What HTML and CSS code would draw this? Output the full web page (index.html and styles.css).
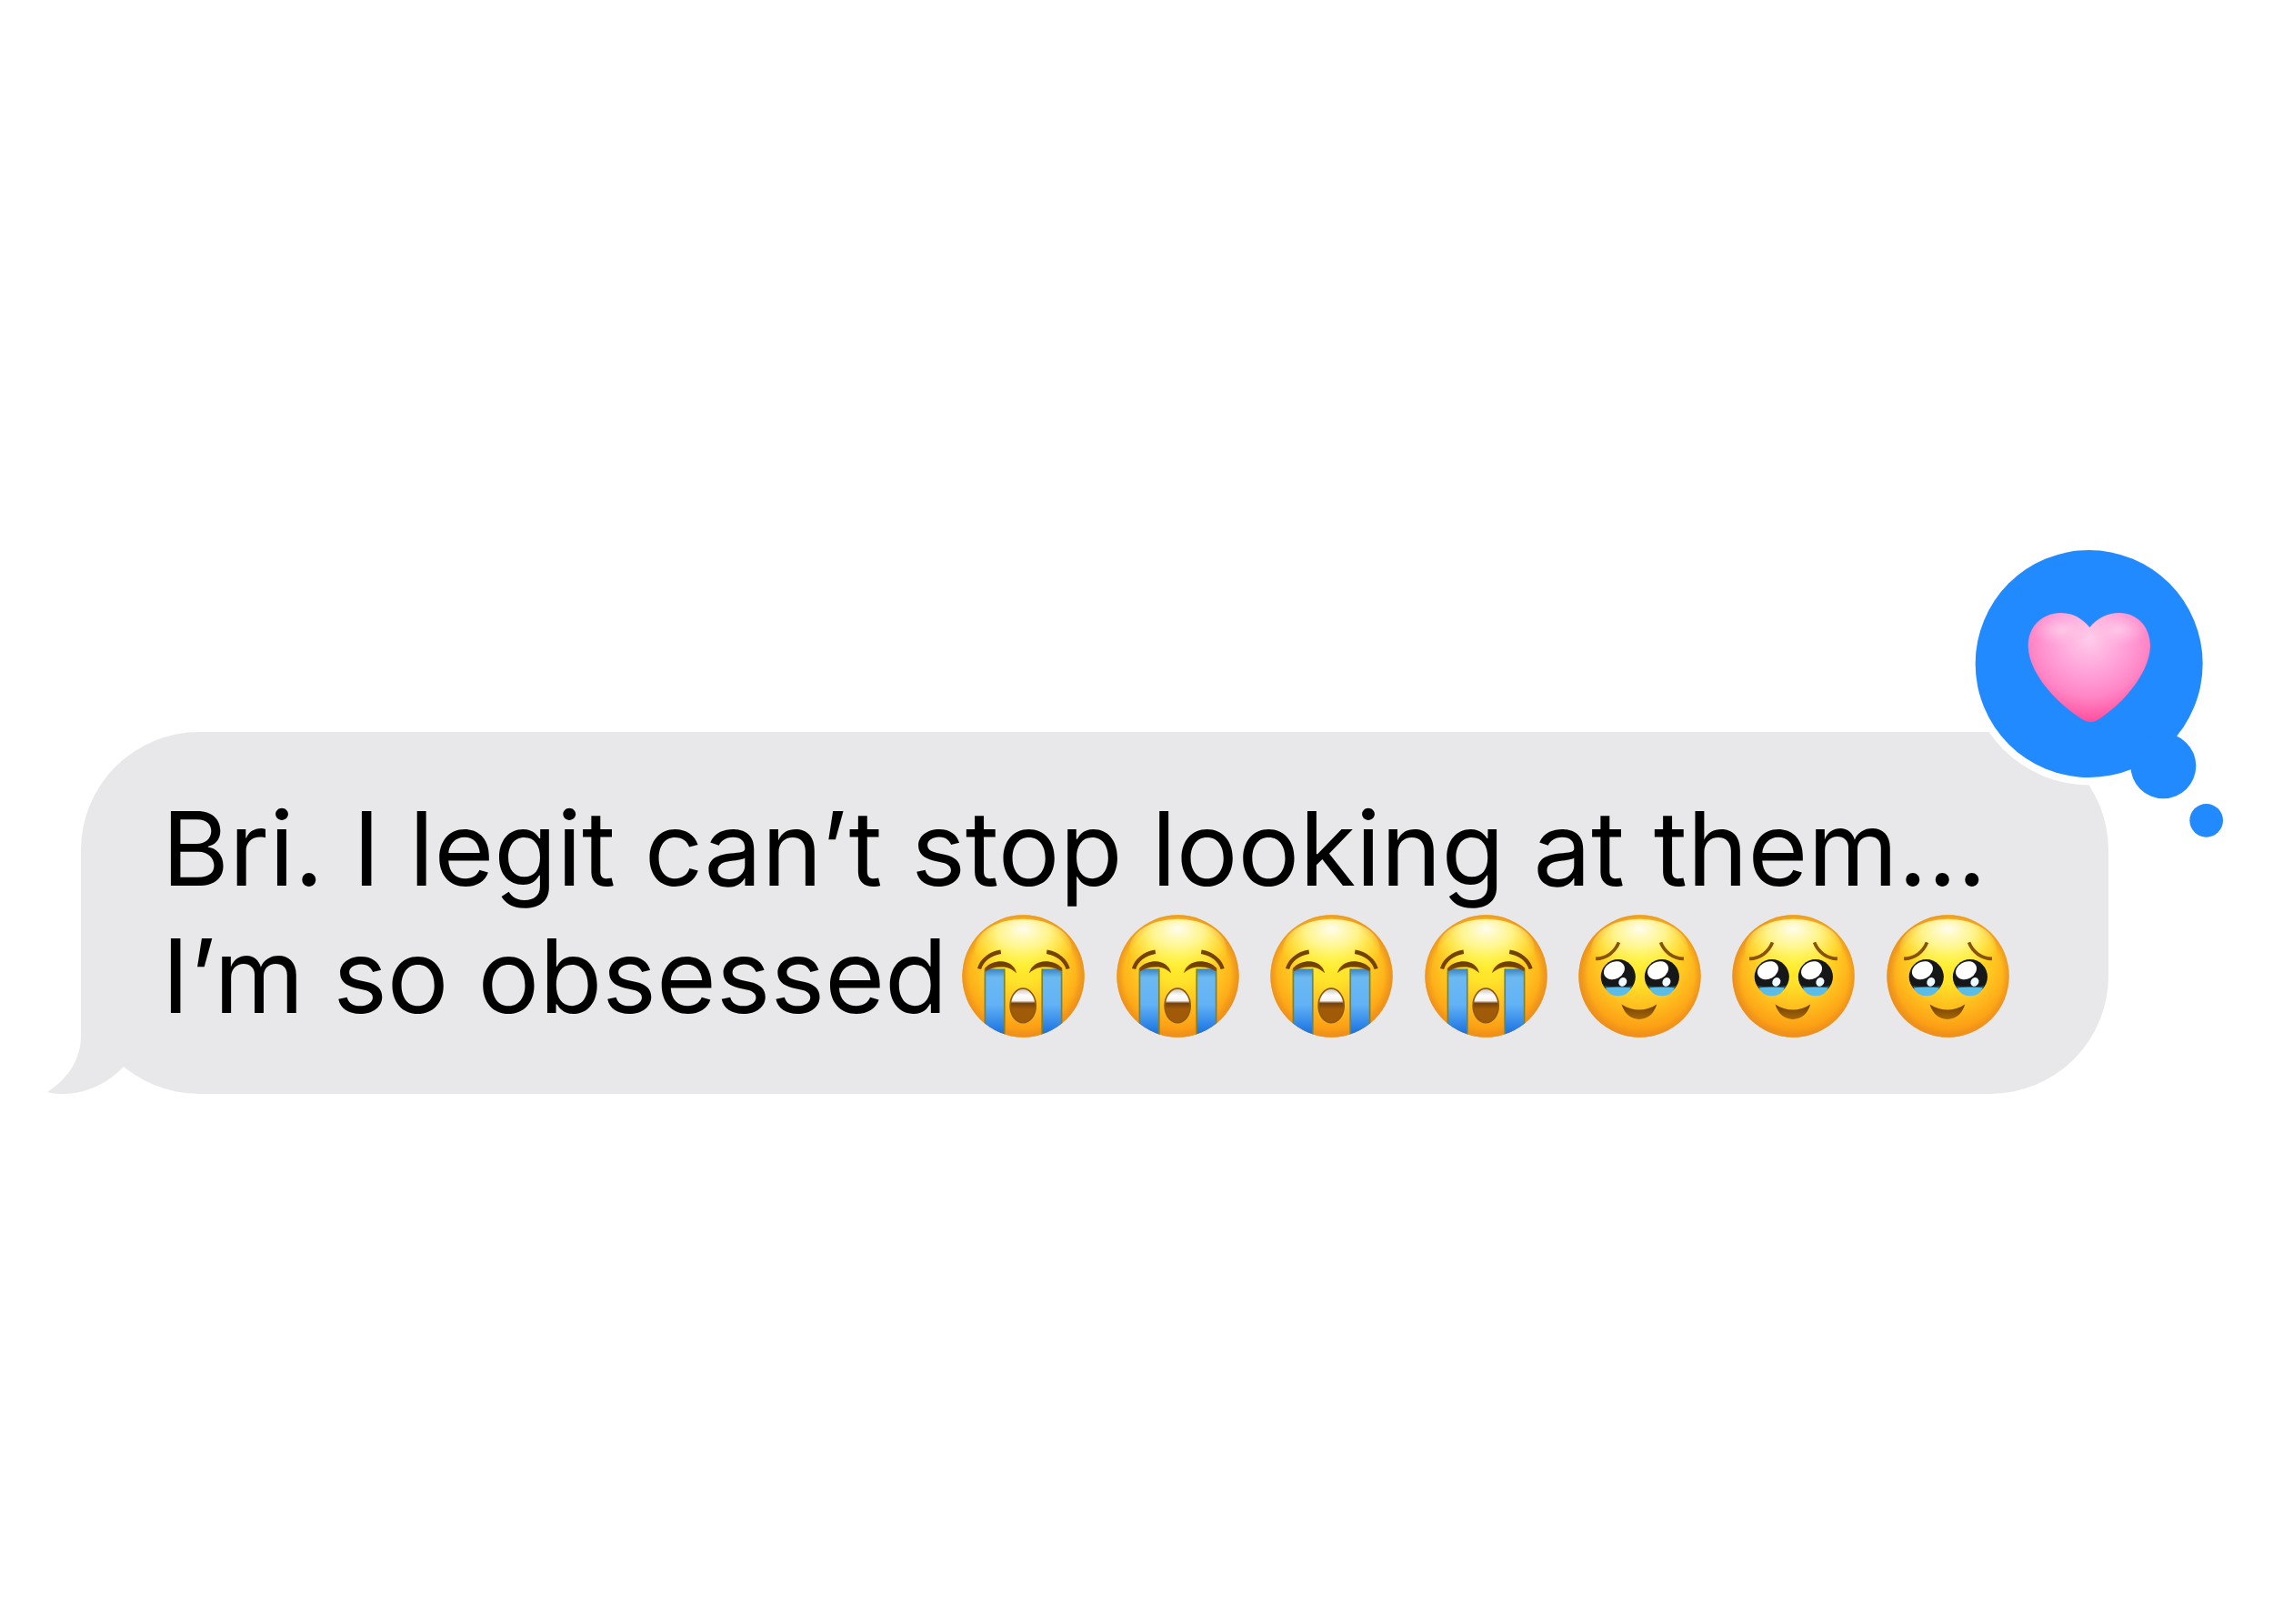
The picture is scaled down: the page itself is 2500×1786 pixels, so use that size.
FILE: index.html
```html
<!DOCTYPE html>
<html lang="en">
<head>
<meta charset="utf-8">
<meta name="viewport" content="width=device-width, initial-scale=1">
<title>Message</title>
<link rel="stylesheet" href="styles.css">
</head>
<body>
<svg class="sprites" aria-hidden="true">
  <defs>
    <radialGradient id="face" gradientUnits="userSpaceOnUse" cx="256" cy="190" r="270">
      <stop offset="0" stop-color="#fff02e"/>
      <stop offset=".3" stop-color="#ffe22a"/>
      <stop offset=".65" stop-color="#ffb81c"/>
      <stop offset="1" stop-color="#f98c10"/>
    </radialGradient>
    <radialGradient id="rim" gradientUnits="userSpaceOnUse" cx="256" cy="248" r="201">
      <stop offset=".87" stop-color="#e88f20" stop-opacity="0"/>
      <stop offset="1" stop-color="#e88f20" stop-opacity=".85"/>
    </radialGradient>
    <radialGradient id="shine" cx=".5" cy=".28" r=".6" fy=".15">
      <stop offset="0" stop-color="#fffdf0"/>
      <stop offset=".45" stop-color="#fff99c" stop-opacity=".85"/>
      <stop offset="1" stop-color="#fff540" stop-opacity="0"/>
    </radialGradient>
    <linearGradient id="tears" x1="0" y1="0" x2="0" y2="1">
      <stop offset="0" stop-color="#3a83bd"/>
      <stop offset=".12" stop-color="#6cb9f2"/>
      <stop offset=".5" stop-color="#62b2f6"/>
      <stop offset=".9" stop-color="#1a73e0"/>
    </linearGradient>
    <linearGradient id="brow" x1="0" y1="0" x2="0" y2="1">
      <stop offset="0" stop-color="#6a3a00"/>
      <stop offset="1" stop-color="#8a5205"/>
    </linearGradient>
    <linearGradient id="smile" x1="0" y1="0" x2="0" y2="1">
      <stop offset="0" stop-color="#6e3f04"/>
      <stop offset="1" stop-color="#a86808"/>
    </linearGradient>
    <linearGradient id="throat" x1="0" y1="0" x2="0" y2="1">
      <stop offset="0" stop-color="#c9c2b8"/>
      <stop offset=".2" stop-color="#ffffff"/>
      <stop offset=".36" stop-color="#f6f0ea"/>
      <stop offset=".43" stop-color="#75430c"/>
      <stop offset=".6" stop-color="#a15b08"/>
      <stop offset="1" stop-color="#a15b08"/>
    </linearGradient>
    <clipPath id="disc"><circle cx="258" cy="248" r="201"/></clipPath>

    <symbol id="sob" viewBox="56 46 404 404">
      <circle cx="258" cy="248" r="201" fill="url(#face)"/>
      <circle cx="258" cy="248" r="201" fill="url(#rim)"/>
      <ellipse cx="258" cy="160" rx="160" ry="100" fill="url(#shine)"/>
      <g clip-path="url(#disc)">
        <path d="M132 224H196V460H132Z M320 224H384V460H320Z" fill="url(#tears)"/>
        <path d="M132 224V460 M196 224V460 M320 224V460 M384 224V460" fill="none" stroke="#78823a" stroke-width="5"/>
      </g>
      <g fill="none" stroke="#754203" stroke-width="13">
        <path d="M113 224C121 196 147 174 184 168"/>
        <path d="M335 168C371 174 397 196 405 224"/>
      </g>
      <path d="M131 222C146 205 166 199 184 199C210 199 231 214 236 238C221 226 208 218 188 218C168 217 150 222 134 232Z" fill="url(#brow)"/>
      <path d="M386 222C371 205 351 199 331 199C305 199 283 214 277 238C292 226 307 218 327 218C348 217 367 222 383 232Z" fill="url(#brow)"/>
      <ellipse cx="257" cy="345" rx="42" ry="56" fill="url(#throat)" stroke="#8f5a10" stroke-width="5"/>
    </symbol>

    <symbol id="eye" viewBox="0 0 120 130" overflow="visible">
      <circle cx="60" cy="60" r="57" fill="#151719"/>
      <path d="M12 89Q60 98 108 89Q94 117 60 117Q26 117 12 89Z" fill="#23465a"/>
      <path d="M18 96Q60 92 102 96Q92 123 60 123Q28 123 18 96Z" fill="#5bbce8"/>
      <ellipse cx="47" cy="39" rx="36" ry="28" transform="rotate(-28 47 39)" fill="#fff"/>
      <ellipse cx="75" cy="77" rx="13" ry="15" transform="rotate(30 75 77)" fill="#eefaff"/>
    </symbol>

    <symbol id="teary" viewBox="50 46 404 404">
      <circle cx="252" cy="248" r="201" fill="url(#face)"/>
      <circle cx="252" cy="248" r="201" fill="url(#rim)"/>
      <ellipse cx="252" cy="160" rx="160" ry="100" fill="url(#shine)"/>
      <g fill="none" stroke="#8a5205" stroke-width="11">
        <path d="M107 191C143 190 171 168 183 137"/>
        <path d="M321 137C333 168 361 190 397 191"/>
      </g>
      <use href="#eye" x="121" y="190" width="120" height="130"/>
      <use href="#eye" x="265" y="190" width="120" height="130"/>
      <path d="M192 341C229 365 272 365 308 341C299 373 277 390 250 390C224 390 202 373 192 341Z" fill="url(#smile)"/>
    </symbol>
  </defs>
</svg>

<main class="thread">
  <article class="bubble">
    <p class="line">Bri. I legit can’t stop looking at them...</p>
    <div class="line line-emoji">
      <span>I’m so obsessed</span>
      <span class="emojis">
        <svg class="emoji" role="img" aria-label="Loudly crying face"><use href="#sob"/></svg>
        <svg class="emoji" role="img" aria-label="Loudly crying face"><use href="#sob"/></svg>
        <svg class="emoji" role="img" aria-label="Loudly crying face"><use href="#sob"/></svg>
        <svg class="emoji" role="img" aria-label="Loudly crying face"><use href="#sob"/></svg>
        <svg class="emoji" role="img" aria-label="Face holding back tears"><use href="#teary"/></svg>
        <svg class="emoji" role="img" aria-label="Face holding back tears"><use href="#teary"/></svg>
        <svg class="emoji" role="img" aria-label="Face holding back tears"><use href="#teary"/></svg>
      </span>
    </div>

    <svg class="tail" viewBox="0 0 128 150" aria-hidden="true">
      <path d="M37 0V86C37 110 25 132 0 148C7 150 13 150 20 150C44 149 67 138 84 120L128 90V0Z" fill="#e8e8ea"/>
    </svg>

    <svg class="reaction" viewBox="0 0 1020 1080" role="img" aria-label="Loved">
      <defs>
        <radialGradient id="heart" gradientUnits="userSpaceOnUse" cx="474" cy="365" r="275">
          <stop offset="0" stop-color="#ffcdea"/>
          <stop offset=".45" stop-color="#ff9fd8"/>
          <stop offset=".7" stop-color="#ff86c6"/>
          <stop offset="1" stop-color="#ff4f9e"/>
        </radialGradient>
        <radialGradient id="lobe">
          <stop offset="0" stop-color="#ffcbe9" stop-opacity=".9"/>
          <stop offset="1" stop-color="#ffb8e2" stop-opacity="0"/>
        </radialGradient>
      </defs>
      <circle cx="473" cy="450" r="400" fill="#fff"/>
      <g fill="#228aff">
        <circle cx="473" cy="450" r="375"/>
        <circle cx="718" cy="787" r="108"/>
        <circle cx="860" cy="967" r="55"/>
      </g>
      <path d="M475 330C449 298 417 282 380 282C318 282 272 328 272 391C272 473 357 577 456 636Q478 648 500 636C594 577 675 473 675 391C675 328 631 282 573 282C535 282 502 298 475 330Z" fill="url(#heart)"/>
      <ellipse cx="382" cy="338" rx="96" ry="54" fill="url(#lobe)"/>
      <ellipse cx="568" cy="338" rx="96" ry="54" fill="url(#lobe)"/>
    </svg>
  </article>
</main>
</body>
</html>
```
FILE: styles.css
```css
* {
  box-sizing: border-box;
}

body {
  margin: 0;
  background: #fff;
  color: #000;
  font-family: Inter, "Liberation Sans", sans-serif;
}

.sprites {
  position: absolute;
  width: 0;
  height: 0;
}

.thread {
  min-height: 100vh;
  padding: 805px 181px 80px 89px;
}

.bubble {
  position: relative;
  padding: 58px 109px 60px 89px;
  border-radius: 130px;
  background: #e8e8ea;
}

.line {
  margin: 0;
  font-size: 113px;
  line-height: 140px;
}

.line-emoji {
  display: flex;
  align-items: center;
  gap: 16px;
}

.line-emoji span {
  white-space: nowrap;
}

.emojis {
  display: flex;
  flex: 1;
  align-items: center;
  justify-content: space-between;
}

.emoji {
  width: 135px;
  height: 135px;
}

.tail {
  position: absolute;
  left: -37px;
  bottom: 0;
  width: 128px;
  height: 150px;
}

.reaction {
  position: absolute;
  top: -225px;
  right: -161px;
  width: 340px;
  height: 360px;
}
```
